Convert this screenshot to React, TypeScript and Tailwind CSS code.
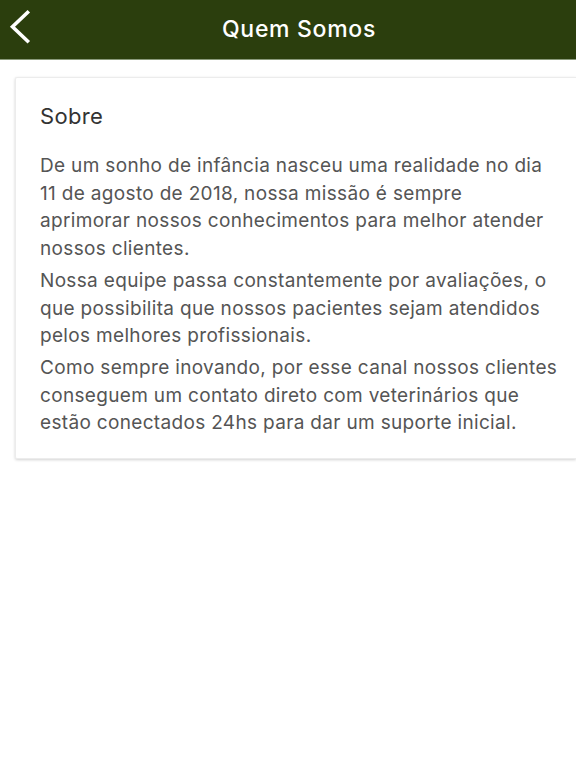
import React from "react";

export default function App() {
  const font = { fontFamily: "Inter, Roboto, 'Liberation Sans', sans-serif" };
  return (
    <div className="w-[576px] h-[768px] bg-white overflow-hidden" style={font}>
      <div className="relative h-[60px] bg-[#2b3e0d] border-b border-[#8a9a7a] flex items-center justify-center">
        <svg className="absolute left-0 top-0" width="40" height="56" viewBox="0 0 40 56">
          <path d="M27.5 12.5 L12.5 26.8 L27.5 41" fill="none" stroke="#ffffff" strokeWidth="3.6" strokeLinecap="square" strokeLinejoin="miter" />
        </svg>
        <span className="ml-[22px] text-white text-[23px] font-medium leading-none tracking-[0.7px]">Quem Somos</span>
      </div>
      <div className="pl-[15px] pt-[17px]">
        <div className="bg-white border border-[#ececec] border-r-0 rounded-l-[2px] shadow-[0_1px_3px_rgba(0,0,0,0.18)] pl-[24px] pr-[4px] pt-[22px] pb-[21px]">
          <h2 className="text-[22px] text-[#333333] leading-[32px] tracking-[0.3px]">Sobre</h2>
          <div className="mt-[20px] text-[19px] leading-[27.7px] text-[#555555] flex flex-col gap-[4px] whitespace-nowrap tracking-[0.33px]">
            <p>De um sonho de infância nasceu uma realidade no dia<br />11 de agosto de 2018, nossa missão é sempre<br />aprimorar nossos conhecimentos para melhor atender<br />nossos clientes.</p>
            <p>Nossa equipe passa constantemente por avaliações, o<br />que possibilita que nossos pacientes sejam atendidos<br />pelos melhores profissionais.</p>
            <p>Como sempre inovando, por esse canal nossos clientes<br />conseguem um contato direto com veterinários que<br />estão conectados 24hs para dar um suporte inicial.</p>
          </div>
        </div>
      </div>
    </div>
  );
}
